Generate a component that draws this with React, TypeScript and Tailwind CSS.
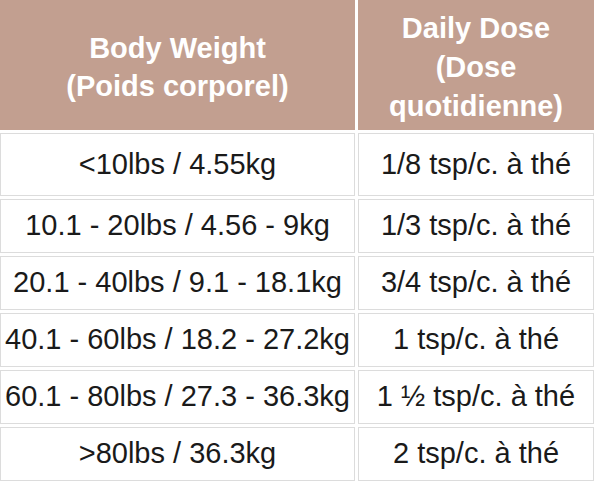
import React from 'react';

const rows: [string, string][] = [
  ['<10lbs / 4.55kg', '1/8 tsp/c. à thé'],
  ['10.1 - 20lbs / 4.56 - 9kg', '1/3 tsp/c. à thé'],
  ['20.1 - 40lbs / 9.1 - 18.1kg', '3/4 tsp/c. à thé'],
  ['40.1 - 60lbs / 18.2 - 27.2kg', '1 tsp/c. à thé'],
  ['60.1 - 80lbs / 27.3 - 36.3kg', '1 ½ tsp/c. à thé'],
  ['>80lbs / 36.3kg', '2 tsp/c. à thé'],
];

export default function App() {
  return (
    <div
      className="w-[595px] h-[482px] overflow-hidden bg-white"
      style={{ fontFamily: '"Liberation Sans", Arial, sans-serif' }}
    >
      <div className="grid grid-cols-[355px_236px] gap-[3px] grid-rows-[130px_63px_54px_54px_54px_54px_54px]">
        {/* Header */}
        <div className="bg-[#c29f90] flex items-center justify-center text-center text-white font-bold text-[29px] leading-[38px] pt-1">
          Body Weight
          <br />
          (Poids corporel)
        </div>
        <div className="bg-[#c29f90] flex items-center justify-center text-center text-white font-bold text-[29px] leading-[39px] pt-1">
          Daily Dose
          <br />
          (Dose
          <br />
          quotidienne)
        </div>

        {rows.map(([weight, dose], i) => (
          <React.Fragment key={i}>
            <div className="border border-[#dcdcdc] flex items-center justify-center text-[29px] text-[#1a1a1a] whitespace-nowrap">
              {weight}
            </div>
            <div className="border border-[#dcdcdc] flex items-center justify-center text-[29px] text-[#1a1a1a] whitespace-nowrap">
              {dose}
            </div>
          </React.Fragment>
        ))}
      </div>
    </div>
  );
}
